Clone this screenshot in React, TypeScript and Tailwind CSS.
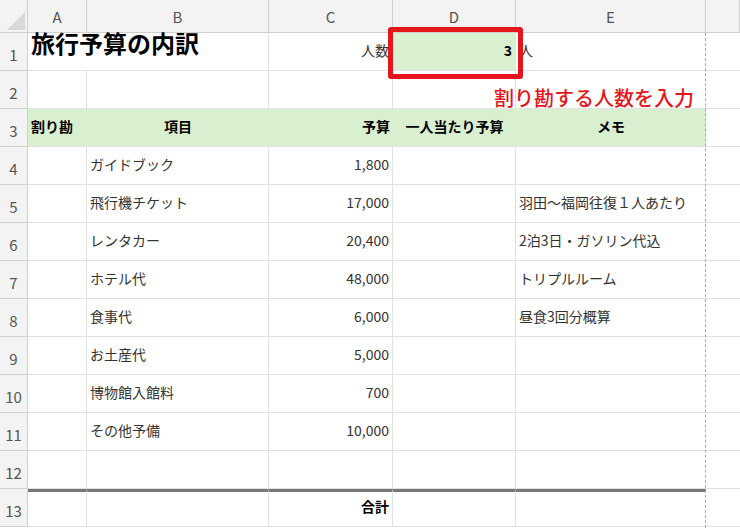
import React from "react";

const rows: { n: number; a?: string; b?: string; c?: string; d?: string; e?: string }[] = [
  { n: 4, b: "ガイドブック", c: "1,800" },
  { n: 5, b: "飛行機チケット", c: "17,000", e: "羽田〜福岡往復１人あたり" },
  { n: 6, b: "レンタカー", c: "20,400", e: "2泊3日・ガソリン代込" },
  { n: 7, b: "ホテル代", c: "48,000", e: "トリプルルーム" },
  { n: 8, b: "食事代", c: "6,000", e: "昼食3回分概算" },
  { n: 9, b: "お土産代", c: "5,000" },
  { n: 10, b: "博物館入館料", c: "700" },
  { n: 11, b: "その他予備", c: "10,000" },
  { n: 12 },
];

const cell = "h-[38px] border-r border-b border-[#e1e1e1] flex items-end pb-[9px] px-[3px] text-[14px] text-[#333] whitespace-nowrap overflow-visible";
const rh = "h-[38px] border-r border-b border-[#d0d0d0] bg-[#f3f3f3] flex items-end justify-center pb-[4px] text-[15px] text-[#555]";
const ec = " border-r-0";

export default function App() {
  return (
    <div className="relative w-[740px] h-[528px] overflow-hidden bg-white" style={{ fontFamily: '"Noto Sans CJK JP", "Noto Sans", sans-serif' }}>
      <div className="grid grid-cols-[28px_59px_182px_124px_123px_190px_34px]">
        <div className="h-[33px] bg-[#f3f3f3] border-r border-b border-[#d0d0d0] relative">
          <div className="absolute right-[2px] bottom-[2px] w-0 h-0 border-l-[18px] border-l-transparent border-b-[18px] border-b-[#d8d8d8]" />
        </div>
        {["A", "B", "C", "D", "E", ""].map((c, i) => (
          <div key={i} className="h-[33px] bg-[#f3f3f3] border-r border-b border-[#d0d0d0] flex items-end justify-center pb-[4px] text-[15px] text-[#555]">{c}</div>
        ))}
        <div className={rh}>1</div>
        <div className={cell + " col-span-2 font-bold text-[24px] text-black pb-[4px]"}>旅行予算の内訳</div>
        <div className={cell + " justify-end"}>人数</div>
        <div className={cell + " justify-end bg-[#d9f0d0] font-bold text-black"}>3</div>
        <div className={cell + ec}>人</div>
        <div className={cell + " border-r-0"} />
        <div className={rh}>2</div>
        <div className={cell} /><div className={cell} /><div className={cell} /><div className={cell} />
        <div className={cell + ec} /><div className={cell + " border-r-0"} />
        <div className={rh}>3</div>
        <div className={cell + " bg-[#d9f0d0] border-r-0 font-bold text-black"}>割り勘</div>
        <div className={cell + " bg-[#d9f0d0] border-r-0 justify-center font-bold text-black"}>項目</div>
        <div className={cell + " bg-[#d9f0d0] border-r-0 justify-end font-bold text-black"}>予算</div>
        <div className={cell + " bg-[#d9f0d0] border-r-0 justify-center font-bold text-black"}>一人当たり予算</div>
        <div className={cell + " bg-[#d9f0d0] border-r-0 justify-center font-bold text-black"}>メモ</div>
        <div className={cell + " border-r-0"} />
        {rows.map((r) => (
          <React.Fragment key={r.n}>
            <div className={rh}>{r.n}</div>
            <div className={cell} />
            <div className={cell}>{r.b}</div>
            <div className={cell + " justify-end"}>{r.c}</div>
            <div className={cell} />
            <div className={cell + ec}>{r.e}</div>
            <div className={cell + " border-r-0"} />
          </React.Fragment>
        ))}
        <div className={rh}>13</div>
        <div className={cell + " border-t-[3px] border-t-[#777]"} />
        <div className={cell + " border-t-[3px] border-t-[#777]"} />
        <div className={cell + " border-t-[3px] border-t-[#777] justify-end font-bold text-black"}>合計</div>
        <div className={cell + " border-t-[3px] border-t-[#777]"} />
        <div className={cell + " border-t-[3px] border-t-[#777]" + ec} />
        <div className={cell + " border-r-0"} />
      </div>
      {/* page break dashed line */}
      <div className="absolute left-[705px] top-[33px] bottom-0 border-l border-dashed border-[#aaa]" />
      {/* annotation */}
      <div className="absolute left-[388px] top-[27px] w-[135px] h-[52px] border-[5px] border-[#e4161b] rounded-[3px]" />
      <div className="absolute left-[494px] top-[86px] text-[20px] font-medium text-[#e4161b] leading-[24px] whitespace-nowrap" style={{ textShadow: "0 0 2px #fff, 0 0 2px #fff" }}>割り勘する人数を入力</div>
    </div>
  );
}
